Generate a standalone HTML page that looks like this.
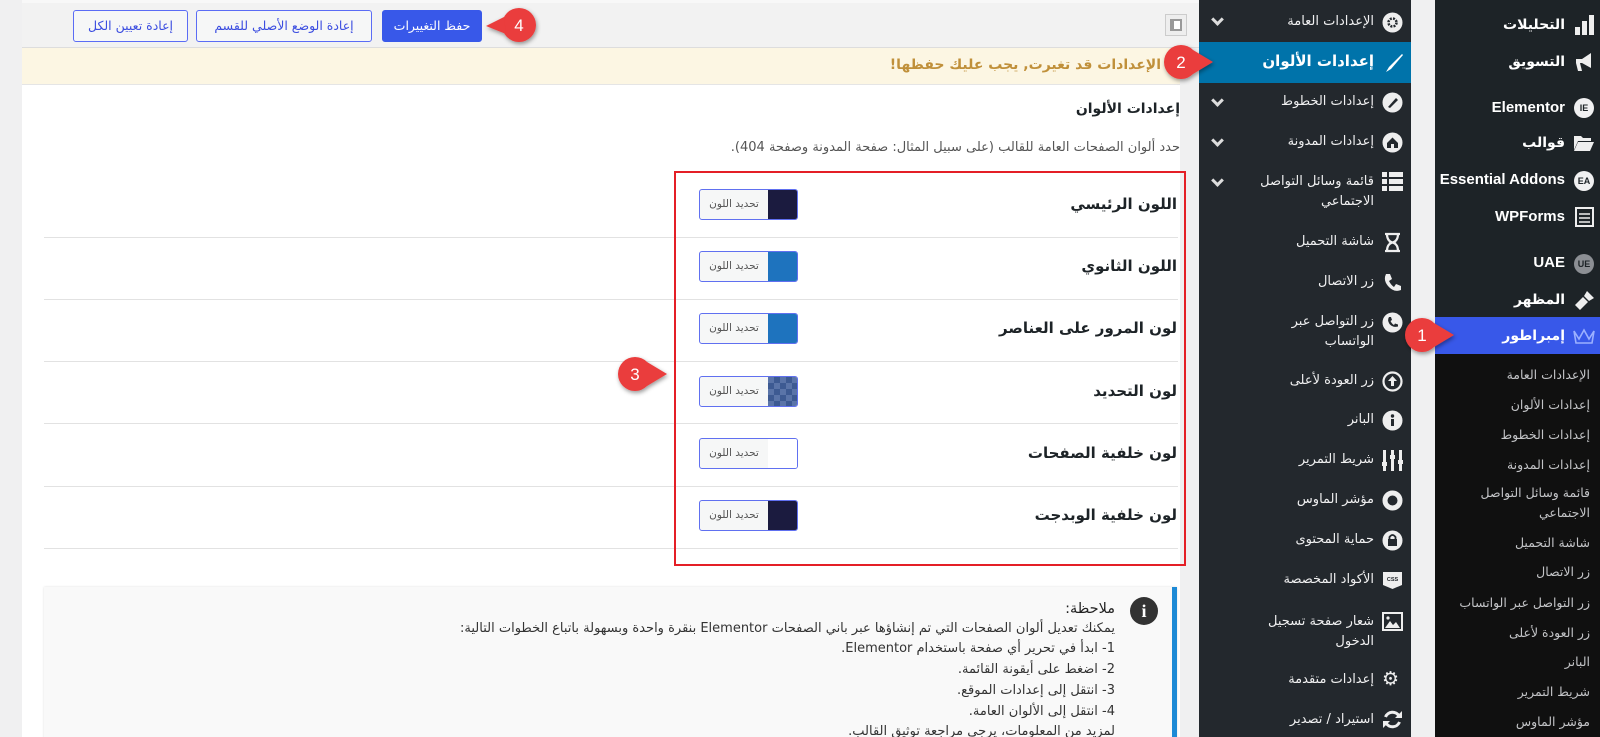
<!DOCTYPE html>
<html><head><meta charset="utf-8"><style>
*{margin:0;padding:0;box-sizing:border-box}
html,body{width:1600px;height:737px;overflow:hidden;background:#f0f0f1}
#w{position:relative;width:1600px;height:737px;overflow:hidden;font-family:"DejaVu Sans","Liberation Sans",sans-serif}
.a{position:absolute}
.r{position:absolute;direction:rtl;text-align:right;white-space:nowrap}
.btn{position:absolute;top:10px;height:32px;border:1px solid #5b6cf5;border-radius:3px;background:#f6f7f7;color:#3b4de0;font-size:12.5px;line-height:30px;text-align:center;direction:rtl}
.lbl{font-size:15px;font-weight:bold;color:#1d2327;right:423px}
.sep{position:absolute;left:44px;width:1134px;height:1px;background:#e2e2e2}
.cp{position:absolute;left:699px;width:99px;height:31px;border:1px solid #6070f0;border-radius:3px;overflow:hidden;background:#f6f7f7}
.cp span{position:absolute;left:0;top:0;width:68px;height:29px;font-size:10.5px;color:#555;text-align:center;line-height:29px;direction:rtl}
.cp i{position:absolute;right:0;top:0;width:29px;height:29px}
.ts{font-size:13px;color:#f0f0f1;right:226px;line-height:20px}
.ic{position:absolute;left:1382px}
.chev{position:absolute;left:1213px;width:9px;height:9px;border-right:3px solid #ddd;border-bottom:3px solid #ddd;transform:rotate(45deg)}
.wm{font-size:14px;font-weight:bold;color:#fff;right:35px;line-height:20px}
.wi{position:absolute;left:1574px;width:20px;height:20px;border-radius:50%;background:#f0f0f1;color:#1d2327;font:bold 9px "Liberation Sans",sans-serif;text-align:center;line-height:20px}
.ws{font-size:12.5px;color:#c3c4c7;right:10px;line-height:20px}
.nt{font-size:13px;color:#333;right:485px;line-height:20px}
</style></head><body><div id="w">
<!-- main area -->
<div class="a" style="left:22px;top:0;width:1158px;height:737px;background:#fff"></div>
<div class="a" style="left:22px;top:0;width:1177px;height:48px;background:#f2f2f2;border-bottom:1px solid #ddd;border-top:3px solid #f8f8f8"></div>
<div class="btn" style="left:73px;width:115px">إعادة تعيين الكل</div>
<div class="btn" style="left:196px;width:176px">إعادة الوضع الأصلي للقسم</div>
<div class="btn" style="left:382px;width:100px;background:#3858e9;border-color:#3858e9;color:#fff">حفظ التغييرات</div>
<div class="a" style="left:1165px;top:14px;width:22px;height:22px;border:1px solid #ccc;background:#eee"><div style="margin:4px;width:12px;height:12px;border:2px solid #999;border-left-width:4px;background:#fff"></div></div>
<div class="a" style="left:22px;top:48px;width:1158px;height:37px;background:#fcf6e3;border-bottom:1px solid #e5e5e5"></div>
<div class="r" style="right:439px;top:57px;font-size:14px;font-weight:bold;color:#c0903a">الإعدادات قد تغيرت, يجب عليك حفظها!</div>
<div class="r" style="right:420px;top:101px;font-size:14px;font-weight:bold;color:#1d2327">إعدادات الألوان</div>
<div class="r" style="right:420px;top:140px;font-size:13px;color:#555">حدد ألوان الصفحات العامة للقالب (على سبيل المثال: صفحة المدونة وصفحة 404).</div>

<div class="sep" style="top:237px"></div><div class="sep" style="top:299px"></div><div class="sep" style="top:361px"></div><div class="sep" style="top:423px"></div><div class="sep" style="top:486px"></div><div class="sep" style="top:548px"></div>
<div class="a" style="left:674px;top:171px;width:512px;height:395px;border:2px solid #e41f26"></div>

<div class="r lbl" style="top:195px">اللون الرئيسي</div>
<div class="r lbl" style="top:257px">اللون الثانوي</div>
<div class="r lbl" style="top:319px">لون المرور على العناصر</div>
<div class="r lbl" style="top:382px">لون التحديد</div>
<div class="r lbl" style="top:444px">لون خلفية الصفحات</div>
<div class="r lbl" style="top:506px">لون خلفية الوبدجت</div>

<div class="cp" style="top:189px"><span>تحديد اللون</span><i style="background:#1b1b3f"></i></div>
<div class="cp" style="top:251px"><span>تحديد اللون</span><i style="background:#1e73be"></i></div>
<div class="cp" style="top:313px"><span>تحديد اللون</span><i style="background:#1e73be"></i></div>
<div class="cp" style="top:376px"><span>تحديد اللون</span><i style="background:repeating-conic-gradient(#3d5a92 0 25%,#5a74a8 0 50%) 0 0/12px 12px"></i></div>
<div class="cp" style="top:438px"><span>تحديد اللون</span><i style="background:#fff"></i></div>
<div class="cp" style="top:500px"><span>تحديد اللون</span><i style="background:#1b1b3f"></i></div>

<!-- note box -->
<div class="a" style="left:44px;top:587px;width:1133px;height:160px;background:#f9f9f9;border-right:5px solid #1e8ad6;box-shadow:0 0 2px #ddd"></div>
<div class="a" style="left:1130px;top:597px;width:28px;height:28px;border-radius:50%;background:#333;color:#fff;font:bold 18px 'Liberation Serif',serif;text-align:center;line-height:28px">i</div>
<div class="r" style="right:485px;top:599px;font-size:14.5px;color:#222;line-height:20px">ملاحظة:</div>
<div class="r nt" style="top:619px">يمكنك تعديل ألوان الصفحات التي تم إنشاؤها عبر باني الصفحات Elementor بنقرة واحدة وبسهولة باتباع الخطوات التالية:</div>
<div class="r nt" style="top:639px">1- ابدأ في تحرير أي صفحة باستخدام Elementor.</div>
<div class="r nt" style="top:660px">2- اضغط على أيقونة القائمة.</div>
<div class="r nt" style="top:681px">3- انتقل إلى إعدادات الموقع.</div>
<div class="r nt" style="top:702px">4- انتقل إلى الألوان العامة.</div>
<div class="r nt" style="top:722px">لمزيد من المعلومات، يرجى مراجعة توثيق القالب.</div>

<!-- theme sidebar -->
<div class="a" style="left:1199px;top:0;width:212px;height:737px;background:#23282d"></div>
<div class="a" style="left:1199px;top:42px;width:212px;height:41px;background:#0073aa"></div>
<svg class="ic" style="top:12px" width="21" height="21"><circle cx="10.5" cy="10.5" r="10" fill="#eee"/><circle cx="10.5" cy="10.5" r="4" fill="none" stroke="#23282d" stroke-width="2.5" stroke-dasharray="2 1.2"/></svg>
<div class="r ts" style="top:12px">الإعدادات العامة</div><div class="chev" style="top:15px"></div>
<div class="r" style="right:226px;top:52px;font-size:15px;font-weight:bold;color:#fff">إعدادات الألوان</div>
<svg class="ic" style="top:52px" width="22" height="22"><path d="M20 2 L7 15 L4 20 L9 17 L21 3Z" fill="#fff"/></svg>
<svg class="ic" style="top:92px" width="21" height="21"><circle cx="10.5" cy="10.5" r="10" fill="#eee"/><path d="M6 15 L14 6 L16 8 L8 16Z" fill="#23282d"/></svg>
<div class="r ts" style="top:92px">إعدادات الخطوط</div><div class="chev" style="top:96px"></div>
<svg class="ic" style="top:132px" width="21" height="21"><circle cx="10.5" cy="10.5" r="10" fill="#eee"/><path d="M5 11 L10.5 5.5 L16 11 V16 H5Z" fill="#23282d"/><rect x="9" y="12" width="3" height="4" fill="#eee"/></svg>
<div class="r ts" style="top:132px">إعدادات المدونة</div><div class="chev" style="top:136px"></div>
<svg class="ic" style="top:172px" width="21" height="20"><g fill="#eee"><rect x="0" y="0" width="5" height="5"/><rect x="7" y="0" width="14" height="5"/><rect x="0" y="7" width="5" height="5"/><rect x="7" y="7" width="14" height="5"/><rect x="0" y="14" width="5" height="5"/><rect x="7" y="14" width="14" height="5"/></g></svg>
<div class="r ts" style="top:172px">قائمة وسائل التواصل<br>الاجتماعي</div><div class="chev" style="top:176px"></div>
<svg class="ic" style="top:232px" width="21" height="21"><path d="M3 2 H18 M3 19 H18 M5 2 Q5 9 10.5 10.5 Q5 12 5 19 M16 2 Q16 9 10.5 10.5 Q16 12 16 19" fill="none" stroke="#eee" stroke-width="2.2"/></svg>
<div class="r ts" style="top:232px">شاشة التحميل</div>
<svg class="ic" style="top:272px" width="21" height="21"><path d="M4 2 L8 2 L10 7 L7 9 Q9 13 12 15 L14 12 L19 14 L19 18 Q12 21 6 14 Q1 8 4 2Z" fill="#eee"/></svg>
<div class="r ts" style="top:272px">زر الاتصال</div>
<svg class="ic" style="top:312px" width="21" height="21"><circle cx="10.5" cy="10.5" r="10" fill="#eee"/><path d="M7 5 L9 5 L10 8 L8.5 9 Q10 12 12 13 L13 11.5 L16 12.5 L16 14.5 Q11 16 7.5 12 Q5 8 7 5Z" fill="#23282d"/></svg>
<div class="r ts" style="top:312px">زر التواصل عبر<br>الواتساب</div>
<svg class="ic" style="top:371px" width="21" height="21"><circle cx="10.5" cy="10.5" r="9" fill="none" stroke="#eee" stroke-width="2.2"/><path d="M10.5 5 L15 10 H12 V15 H9 V10 H6Z" fill="#eee"/></svg>
<div class="r ts" style="top:371px">زر العودة لأعلى</div>
<svg class="ic" style="top:410px" width="21" height="21"><circle cx="10.5" cy="10.5" r="10" fill="#eee"/><rect x="9" y="9" width="3" height="7" fill="#23282d"/><circle cx="10.5" cy="6" r="1.7" fill="#23282d"/></svg>
<div class="r ts" style="top:410px">البانر</div>
<svg class="ic" style="top:450px" width="21" height="21"><g fill="#eee"><rect x="1" y="0" width="3" height="21"/><rect x="9" y="0" width="3" height="21"/><rect x="17" y="0" width="3" height="21"/><rect x="0" y="12" width="5" height="4"/><rect x="8" y="5" width="5" height="4"/><rect x="16" y="10" width="5" height="4"/></g></svg>
<div class="r ts" style="top:450px">شريط التمرير</div>
<svg class="ic" style="top:490px" width="21" height="21"><circle cx="10.5" cy="10.5" r="7.5" fill="none" stroke="#eee" stroke-width="5"/></svg>
<div class="r ts" style="top:490px">مؤشر الماوس</div>
<svg class="ic" style="top:530px" width="21" height="21"><circle cx="10.5" cy="10.5" r="10" fill="#eee"/><rect x="6" y="9" width="9" height="7" fill="#23282d"/><path d="M7.5 9 V7 Q10.5 3 13.5 7 V9" fill="none" stroke="#23282d" stroke-width="1.8"/></svg>
<div class="r ts" style="top:530px">حماية المحتوى</div>
<svg class="ic" style="top:570px" width="21" height="21"><path d="M1 2 H20 V15 L10.5 19 L1 15Z" fill="#eee"/><text x="10.5" y="11" font-size="5.5" font-family="Liberation Sans" text-anchor="middle" fill="#23282d" font-weight="bold">CSS</text></svg>
<div class="r ts" style="top:570px">الأكواد المخصصة</div>
<svg class="ic" style="top:612px" width="21" height="19"><rect x="1" y="1" width="19" height="17" fill="none" stroke="#eee" stroke-width="2"/><path d="M3 16 L8 9 L11 13 L14 10 L18 16Z" fill="#eee"/><circle cx="6" cy="6" r="1.6" fill="#eee"/></svg>
<div class="r ts" style="top:612px">شعار صفحة تسجيل<br>الدخول</div>
<div class="a" style="left:1382px;top:668px;font-size:19px;color:#eee;line-height:22px">⚙</div><div class="r ts" style="top:670px">إعدادات متقدمة</div>
<svg class="ic" style="top:709px" width="21" height="21"><path d="M17 7 A7.5 7.5 0 0 0 3.5 8 M4 14 A7.5 7.5 0 0 0 17.5 13" fill="none" stroke="#eee" stroke-width="3"/><path d="M20 2 V9 H13Z M1 19 V12 H8Z" fill="#eee"/></svg>
<div class="r ts" style="top:710px">استيراد / تصدير</div>

<!-- WP sidebar -->
<div class="a" style="left:1435px;top:0;width:165px;height:737px;background:#1d2327"></div>
<div class="a" style="left:1435px;top:317px;width:165px;height:37px;background:#3858e9"></div>
<div class="a" style="left:1435px;top:354px;width:165px;height:383px;background:#101010"></div>
<div class="r wm" style="top:15px">التحليلات</div>
<svg class="a" style="left:1574px;top:15px" width="20" height="20"><g fill="#eee"><rect x="1" y="12" width="5" height="8"/><rect x="8" y="6" width="5" height="14"/><rect x="15" y="0" width="5" height="20"/></g></svg>
<div class="r wm" style="top:52px">التسويق</div>
<svg class="a" style="left:1574px;top:51px" width="20" height="22"><path d="M2 8 H8 L17 2 V17 L8 12 H6 L8 20 H4 L2 12Z" fill="#eee"/></svg>
<div class="r wm" style="top:98px;font-family:'Liberation Sans',sans-serif;font-size:15px">Elementor</div><div class="wi" style="top:98px">IE</div>
<div class="r wm" style="top:133px">قوالب</div>
<svg class="a" style="left:1574px;top:135px" width="20" height="16"><path d="M0 1 H7 L9 3 H17 V6 H4 L0 15Z M4 7 H20 L16 16 H0Z" fill="#eee"/></svg>
<div class="r wm" style="top:170px;font-family:'Liberation Sans',sans-serif;font-size:15px">Essential Addons</div><div class="wi" style="top:171px">EA</div>
<div class="r wm" style="top:207px;font-family:'Liberation Sans',sans-serif;font-size:15px">WPForms</div>
<svg class="a" style="left:1575px;top:207px" width="19" height="20"><rect x="1" y="1" width="17" height="18" fill="none" stroke="#eee" stroke-width="2"/><path d="M4 7 H15 M4 11 H15 M4 15 H15" stroke="#eee" stroke-width="1.5"/></svg>
<div class="r wm" style="top:253px;font-family:'Liberation Sans',sans-serif;font-size:15px">UAE</div><div class="wi" style="top:254px;background:#8c8f94">UE</div>
<div class="r wm" style="top:290px">المظهر</div>
<svg class="a" style="left:1574px;top:290px" width="21" height="21"><path d="M13 1 L20 8 L15 11 L10 6Z M9 7 L14 12 L6 20 L1 15Z" fill="#eee"/></svg>
<div class="r wm" style="top:326px">إمبراطور</div>
<svg class="a" style="left:1573px;top:328px" width="22" height="16"><path d="M1 3 L6 11 L11 2 L16 11 L21 3 L19 15 H3Z" fill="none" stroke="#9bb0ff" stroke-width="1.6"/></svg>
<div class="r ws" style="top:365px">الإعدادات العامة</div>
<div class="r ws" style="top:395px">إعدادات الألوان</div>
<div class="r ws" style="top:425px">إعدادات الخطوط</div>
<div class="r ws" style="top:455px">إعدادات المدونة</div>
<div class="r ws" style="top:483px">قائمة وسائل التواصل<br>الاجتماعي</div>
<div class="r ws" style="top:533px">شاشة التحميل</div>
<div class="r ws" style="top:562px">زر الاتصال</div>
<div class="r ws" style="top:593px">زر التواصل عبر الواتساب</div>
<div class="r ws" style="top:623px">زر العودة لأعلى</div>
<div class="r ws" style="top:652px">البانر</div>
<div class="r ws" style="top:682px">شريط التمرير</div>
<div class="r ws" style="top:712px">مؤشر الماوس</div>

<!-- badges -->
<svg class="a" style="left:0;top:0" width="1600" height="737">
<defs><filter id="s"><feDropShadow dx="1" dy="2" stdDeviation="2" flood-opacity=".4"/></filter></defs>
<g filter="url(#s)" fill="#ea3c3c">
<circle cx="519" cy="25" r="17"/><path d="M504 17 L486 26 L506 34Z"/>
<circle cx="1181" cy="62" r="17"/><path d="M1193 50 L1213 62 L1193 74Z"/>
<circle cx="1422" cy="335" r="17"/><path d="M1434 323 L1454 335 L1434 347Z"/>
<circle cx="635" cy="374" r="17"/><path d="M647 362 L667 374 L647 386Z"/>
</g>
<g fill="#fff" font-family="Liberation Sans" font-size="17" text-anchor="middle">
<text x="519" y="31">4</text><text x="1181" y="68">2</text><text x="1422" y="341">1</text><text x="635" y="380">3</text>
</g></svg>
</div></body></html>
